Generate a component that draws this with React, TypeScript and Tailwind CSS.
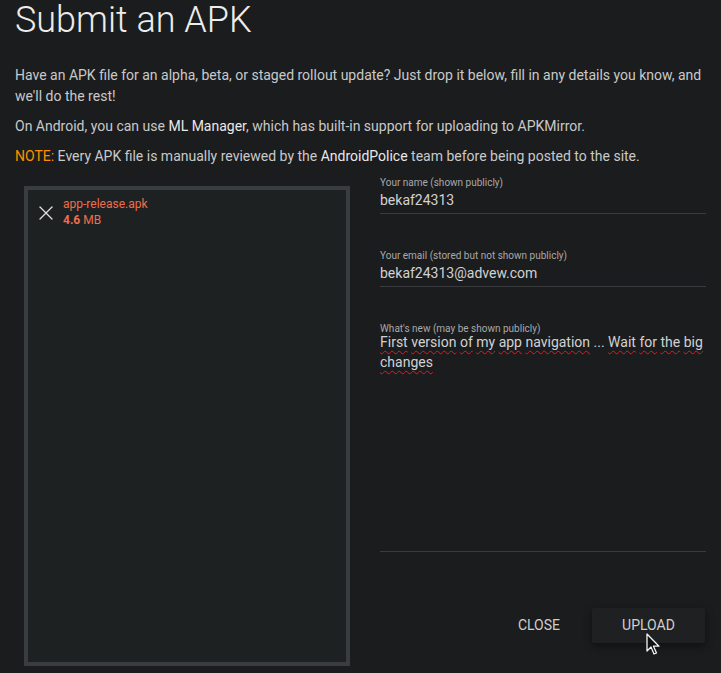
import { X } from "lucide-react";

function Field({ label, value }: { label: string; value: string }) {
    return (
        <div className="flex flex-col border-b border-[#3a3b3e] pb-[3px]">
            <span className="text-[10px] leading-[14px] text-[#a9a9a9]">{label}</span>
            <span className="text-[14px] leading-[20px] text-[#d2d2d2]">{value}</span>
        </div>
    );
}

const words = ["First", "version", "of", "my", "app", "navigation", "...", "Wait", "for", "the", "big", "changes"];

export default function App() {
    return (
        <div className="min-h-[673px] bg-[#1b1c1e] px-[15px] font-['Roboto',sans-serif] text-[#c9c9c9]">
            <h1 className="text-[36px] leading-[40px] font-light text-[#ececec]">Submit an APK</h1>

            <div className="mt-[25px] text-[14px] leading-[21px]">
                <p>
                    Have an APK file for an alpha, beta, or staged rollout update? Just drop it below, fill in any details you know, and we'll do the rest!
                </p>
                <p className="mt-[9px]">
                    On Android, you can use <span className="text-[#e9e9e9]">ML Manager</span>, which has built-in support for uploading to APKMirror.
                </p>
                <p className="mt-[9px]">
                    <span className="text-[#ff8f00]">NOTE:</span> Every APK file is manually reviewed by the{" "}
                    <span className="text-[#e9e9e9]">AndroidPolice</span> team before being posted to the site.
                </p>
            </div>

            <div className="mt-[9px] flex flex-row">
                <div className="ml-[9px] mt-[10px] h-[480px] w-[326px] border-4 border-[#3a3d40] bg-[#1e2122]">
                    <div className="flex flex-row items-center gap-[5px] pl-[6px] pt-[6px]">
                        <X size={24} strokeWidth={1.3} className="mt-[2px] text-[#e0e0e0]" />
                        <div className="flex flex-col text-[12px] leading-[16px] text-[#ee6e4c]">
                            <span>app-release.apk</span>
                            <span>
                                <span className="font-bold">4.6</span> MB
                            </span>
                        </div>
                    </div>
                </div>

                <div className="ml-[30px] flex w-[326px] flex-col">
                    <Field label="Your name (shown publicly)" value="bekaf24313" />
                    <div className="mt-[35px]">
                        <Field label="Your email (stored but not shown publicly)" value="bekaf24313@advew.com" />
                    </div>
                    <div className="mt-[36px] flex h-[229px] flex-col border-b border-[#3a3b3e]">
                        <span className="text-[10px] leading-[11px] text-[#a9a9a9]">What's new (may be shown publicly)</span>
                        <p className="-mt-[2px] text-[14px] leading-[20px] text-[#d2d2d2]">
                            {words.map((w, i) => (
                                <span key={i}>
                                    <span className={w === "..." ? "" : "underline decoration-wavy decoration-[#d4202a] decoration-1 underline-offset-[3px]"}>
                                        {w}
                                    </span>
                                    {i < words.length - 1 ? " " : ""}
                                </span>
                            ))}
                        </p>
                    </div>

                    <div className="mt-[56px] flex flex-row items-center justify-end">
                        <button className="h-[35px] px-[20px] text-[14px] uppercase text-[#cfcfcf]">Close</button>
                        <button className="relative ml-[12px] mr-[1px] h-[35px] w-[113px] rounded-[2px] bg-[#1f2022] text-[14px] uppercase text-[#cfcfcf] shadow-[0_3px_8px_rgba(0,0,0,0.45)]">
                            Upload
                            <svg className="absolute left-[54px] top-[25px]" width="14" height="23" viewBox="0 0 14 23">
                                <path d="M1 1 L1 18 L5 14 L8 21 L10.5 20 L7.5 13.2 L13 13.2 Z" fill="#111" stroke="#f4f4f4" strokeWidth="1.3" strokeLinejoin="round" />
                            </svg>
                        </button>
                    </div>
                </div>
            </div>
        </div>
    );
}
